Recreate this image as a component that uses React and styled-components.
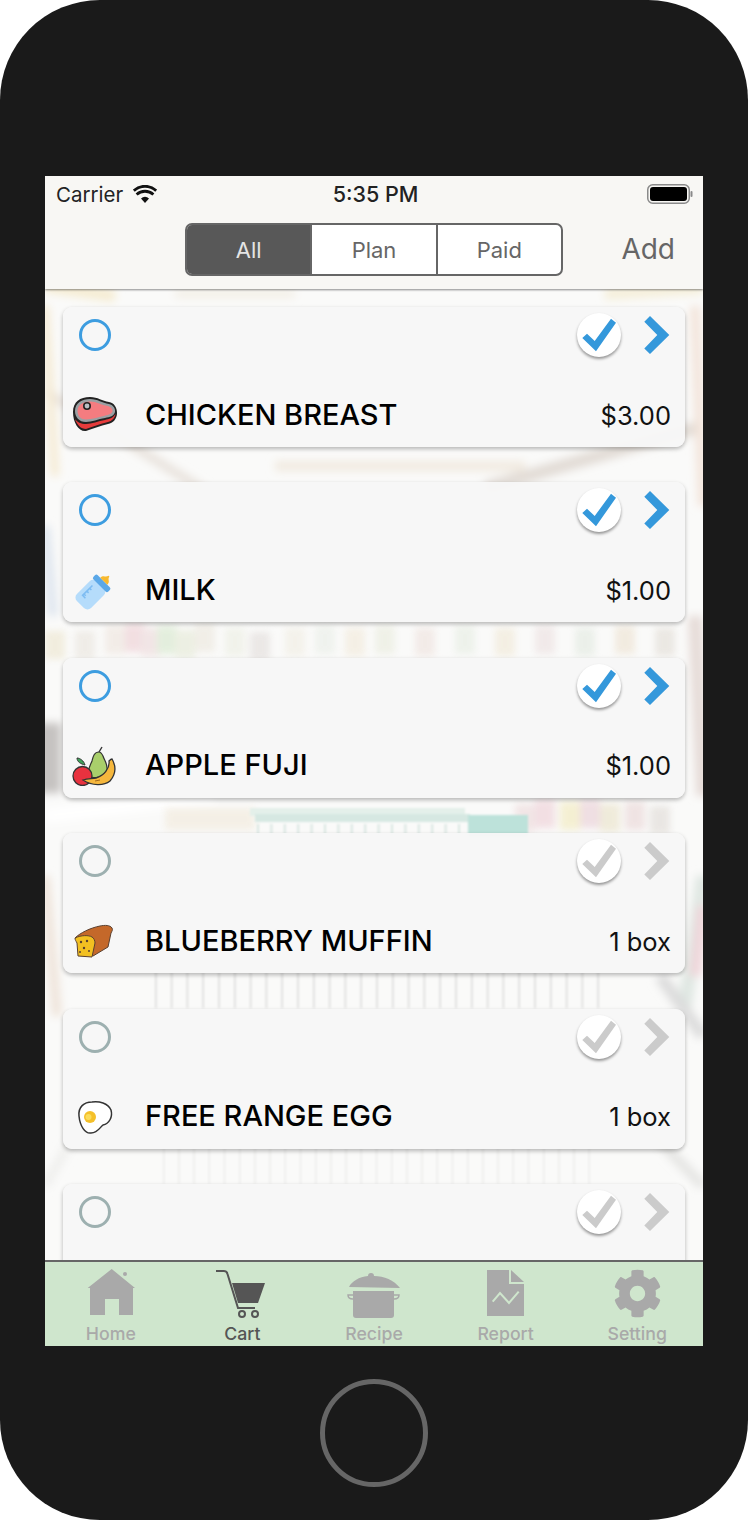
import styled, { createGlobalStyle } from "styled-components"
import { FaCog } from "react-icons/fa"

const GlobalStyle = createGlobalStyle`
    html, body {
        margin: 0;
        padding: 0;
        background: #fff;
    }
    * {
        box-sizing: border-box;
    }
`

const Phone = styled.div`
    width: 748px;
    height: 1520px;
    background: #1a1a1a;
    border-radius: 100px;
    padding-top: 176px;
    display: flex;
    flex-direction: column;
    align-items: center;
    font-family: Inter, "Liberation Sans", sans-serif;
    overflow: hidden;
`
const Screen = styled.div`
    position: relative;
    width: 658px;
    height: 1170px;
    background: #fafaf9;
    display: flex;
    flex-direction: column;
    overflow: hidden;
`
const Backdrop = styled.svg`
    position: absolute;
    left: 0;
    top: 0;
    width: 658px;
    height: 1170px;
`
const HomeButton = styled.div`
    width: 108px;
    height: 108px;
    margin-top: 33px;
    border-radius: 50%;
    border: 5px solid #666;
`
const Header = styled.header`
    position: relative;
    z-index: 2;
    height: 113px;
    flex: none;
    background: #f8f7f4;
    box-shadow: 0 1px 2px rgba(0, 0, 0, 0.45);
`
const StatusBar = styled.div`
    height: 36px;
    padding: 0 10px 0 11px;
    display: flex;
    align-items: center;
    font-size: 20.5px;
    color: #222;
    position: relative;
`
const Carrier = styled.span`
    margin-right: 10px;
`
const Clock = styled.span`
    position: absolute;
    left: 0;
    right: 0;
    text-align: center;
    font-size: 21.5px;
    font-weight: 500;
    margin-left: 3px;
`
const Battery = styled.svg`
    margin-left: auto;
`
const NavBar = styled.div`
    height: 77px;
    padding: 11px 28px 13px 140px;
    display: flex;
    align-items: flex-start;
    justify-content: space-between;
`
const Segments = styled.div`
    display: flex;
    width: 378px;
    height: 53px;
    border: 2px solid #666;
    border-radius: 7px;
    background: #fff;
    overflow: hidden;
`
const Segment = styled.div`
    flex: 1;
    display: flex;
    align-items: center;
    justify-content: center;
    font-size: 22px;
    color: ${props => props.$active ? "#e4e4e4" : "#666"};
    background: ${props => props.$active ? "#585858" : "transparent"};
    & + & {
        border-left: 2px solid #666;
    }
`
const AddButton = styled.span`
    font-size: 28px;
    line-height: 53px;
    color: #666;
`
const List = styled.main`
    position: relative;
    z-index: 1;
    flex: 1;
    min-height: 0;
    padding: 18px 18px 0;
    display: flex;
    flex-direction: column;
    gap: 35.4px;
    overflow: hidden;
`
const Card = styled.article`
    flex: none;
    height: 140px;
    border-radius: 9px;
    background: rgba(247, 247, 247, 0.96);
    box-shadow: 0 2px 4px rgba(0, 0, 0, 0.28);
    display: flex;
    flex-direction: column;
    justify-content: space-between;
`
const CardTop = styled.div`
    padding: 6px 15px 0 16px;
    display: flex;
    align-items: center;
`
const Radio = styled.span`
    width: 32px;
    height: 32px;
    border-radius: 50%;
    border: 3px solid ${props => props.$on ? "#3d9de0" : "#9db0b0"};
    margin-right: auto;
`
const CheckButton = styled.span`
    width: 44px;
    height: 44px;
    border-radius: 50%;
    background: #fff;
    box-shadow: 0 2px 3px rgba(0, 0, 0, 0.4);
    margin-right: 23px;
    display: flex;
`
const CardBottom = styled.div`
    height: 56px;
    padding: 0 14px 8px 9px;
    display: flex;
    align-items: center;
`
const ItemIcon = styled.span`
    width: 46px;
    height: 40px;
    margin-right: 27px;
    display: flex;
`
const ItemName = styled.span`
    font-size: 29px;
    font-weight: 500;
    color: #000;
    padding-bottom: 2px;
`
const ItemValue = styled.span`
    margin-left: auto;
    font-size: 25.5px;
    color: #111;
`
const TabBar = styled.nav`
    position: relative;
    z-index: 2;
    flex: none;
    height: 86px;
    background: #cfe6cd;
    border-top: 2px solid #666;
    display: grid;
    grid-template-columns: repeat(5, 1fr);
`
const Tab = styled.div`
    display: flex;
    flex-direction: column;
    align-items: center;
    padding-top: 5px;
    color: ${props => props.$active ? "#555" : "#a9a9a9"};
`
const TabGlyph = styled.div`
    width: 60px;
    height: 52px;
    display: flex;
    align-items: center;
    justify-content: center;
`
const TabLabel = styled.span`
    font-size: 17.7px;
    line-height: 20px;
    font-weight: 500;
    margin-top: 5px;
`

const Wifi = () => (
    <svg width="24" height="18" viewBox="0 0 24 18">
        <path d="M12 18l-4-4.600a6 6 0 0 1 8 0z" fill="#111" />
        <path d="M3.600 8.600a12.200 12.200 0 0 1 16.800 0M.8 4.600a16.600 16.600 0 0 1 22.400 0" fill="none" stroke="#111" strokeWidth="2.800" transform="translate(0 1)" />
    </svg>
)

const Check = ({ color }) => (
    <svg width="44" height="44" viewBox="0 0 44 44">
        <path d="M5.300 25L10 20.700l7.700 7.300L34 5.700l5 4L19 38.300z" fill={color} />
    </svg>
)

const Chevron = ({ color }) => (
    <svg width="26" height="38" viewBox="0 0 26 38">
        <path d="M.3 5.700L6 0l19.300 19L6 38 .3 32.400 13.300 19z" fill={color} />
    </svg>
)

const Meat = () => (
    <svg width="46" height="40" viewBox="0 0 46 40">
        <path d="M1 17C1 7 8 2 18 2c8 0 12 4 19 5 5 1 8 5 8 11s-4 10-9 11c-8 2-14 4-22 7C7 37 1 28 1 17z" fill="#222" />
        <path d="M3 24c2 6 6 10 11 10 8-3 14-5 22-7 4-1 7-4 7.500-8-2.500 4-6.500 5-10.500 6-7 1-13 4-19 4-5 0-9-2-11-5z" fill="#e63b3b" />
        <path d="M3 16C3 8 10 4 18 4c8 0 12 4 19 5 4 1 6.500 4 6 8-1 4-5 5-10 6-7 1-13 4-19 4C7 27 3 22 3 16z" fill="#9aa0a3" />
        <path d="M5.500 16c0-6 5.500-9.500 12.500-9.500S29 10 36 11c3 1 5 3 4.500 5.500C40 19 36 20 32 21c-6 1-12 3.500-18 3.500-5 0-8.500-3.500-8.500-8.500z" fill="#f47c80" />
        <circle cx="15" cy="11" r="4" fill="#222" />
        <circle cx="15" cy="11" r="2.400" fill="#b9c0c4" />
    </svg>
)

const Bottle = () => (
    <svg width="46" height="40" viewBox="0 0 46 40">
        <g transform="translate(2 -1) rotate(45 22 20)">
            <rect x="12" y="14" width="20" height="28" rx="5" fill="#b5dcfb" />
            <rect x="11.500" y="9" width="21" height="6" rx="2" fill="#5ba8e8" />
            <path d="M17 9c0-4 3-4 4-6 0-2 2-2 2 0 1 2 4 2 4 6z" fill="#f7b92f" />
            <path d="M17 20v14h4M17 24h2.500M17 28h2.500M17 32h2.500" stroke="#7dbcf2" strokeWidth="1.500" fill="none" />
        </g>
    </svg>
)

const Fruit = () => (
    <svg width="46" height="40" viewBox="0 0 46 40">
        <path d="M27 6c-5 0-6 5-7 9-2 5-5 9-3 15 5 4 15 0 18-6 1-6-3-10-4-14-1-2-2-4-4-4z" fill="#a9cf6b" stroke="#333" strokeWidth="1.200" />
        <path d="M27 6l3-5" stroke="#333" strokeWidth="1.400" />
        <path d="M13 19c-1-4-5-7-8-7 0 4 4 6 8 7z" fill="#3fa35a" stroke="#333" strokeWidth="1" />
        <circle cx="10.500" cy="30" r="9.500" fill="#e8323f" stroke="#333" strokeWidth="1.300" />
        <path d="M40 13c4 7 4 15-2 22-6 5-18 5-27-1 5-2 9-1 13-2 8-2 14-10 13-17 1-1 2-2 3-2z" fill="#f5b73d" stroke="#333" strokeWidth="1.300" />
        <path d="M23 35l5-1" stroke="#a36a1c" strokeWidth="1" />
    </svg>
)

const Bread = () => (
    <svg width="46" height="40" viewBox="0 0 46 40">
        <path d="M3 17C8 12 18 7 28 5c5-1 10-1 12 2 1 2 0 3-1 5l-3 14-15 9z" fill="#c4682a" stroke="#5a4030" strokeWidth="1" />
        <path d="M3 17c6-3 14-3 17-1 2 1 3 4 3 6l-3 14-14-1-1-13c-1-2-2-3-2-5z" fill="#f2c021" stroke="#5a4030" strokeWidth="1" />
        <circle cx="9" cy="21" r="1.200" fill="#5a4030" />
        <circle cx="15" cy="20" r="1.200" fill="#5a4030" />
        <circle cx="12" cy="27" r="1.200" fill="#5a4030" />
        <circle cx="8" cy="31" r="1" fill="#5a4030" />
        <circle cx="17" cy="30" r="1" fill="#5a4030" />
    </svg>
)

const Egg = () => (
    <svg width="46" height="40" viewBox="0 0 46 40">
        <path d="M7 19c-1-9 5-14 13-14 7-1 16 1 19 8 2 7-2 14-8 15-3 2-5 8-12 8-6 1-11-7-12-17z" fill="#fff" stroke="#333" strokeWidth="1.500" />
        <circle cx="18" cy="20" r="6" fill="#f4c02a" />
        <circle cx="16.500" cy="20" r="3" fill="#fbdc5a" />
    </svg>
)

const HomeIcon = () => (
    <svg width="60" height="52" viewBox="0 0 60 52" fill="currentColor">
        <path d="M30.700 2L54 21h-2v27H38V32H24v16H9V21H6.700z" />
        <circle cx="44" cy="7" r="2" />
    </svg>
)

const CartIcon = () => (
    <svg width="60" height="52" viewBox="0 0 60 52" fill="currentColor">
        <path d="M4 4h8c2 0 3 1 3.500 3L26 41h17" fill="none" stroke="currentColor" strokeWidth="2" />
        <path d="M20 16h33l-7 20H26z" />
        <circle cx="30" cy="47" r="3" fill="none" stroke="currentColor" strokeWidth="2" />
        <circle cx="43" cy="47" r="3" fill="none" stroke="currentColor" strokeWidth="2" />
    </svg>
)

const PotIcon = () => (
    <svg width="60" height="52" viewBox="0 0 60 52" fill="currentColor">
        <path d="M9 24h41v24c0 2-1 3-3 3H12c-2 0-3-1-3-3z" />
        <path d="M5 20c3-6 10-10 19-11 0-2 1-3 3-3s3 1 3 3c10 0 20 4 26 12z" />
        <path d="M9 28H4c0 3 2 4 5 4M50 28h5c0 3-2 4-5 4" fill="none" stroke="currentColor" strokeWidth="1.500" />
    </svg>
)

const ReportIcon = () => (
    <svg width="60" height="52" viewBox="0 0 60 52" fill="currentColor">
        <path d="M11 3h22v14h15v32H11z" />
        <path d="M35 3l13 12H35z" />
        <path d="M16.700 34.700L24 26l9 10 9.700-11.300" fill="none" stroke="#cfe6cd" strokeWidth="2" />
    </svg>
)

const items = [
    { name: "CHICKEN BREAST", value: "$3.00", icon: <Meat />, on: true },
    { name: "MILK", value: "$1.00", icon: <Bottle />, on: true },
    { name: "APPLE FUJI", value: "$1.00", icon: <Fruit />, on: true },
    { name: "BLUEBERRY MUFFIN", value: "1 box", icon: <Bread />, on: false },
    { name: "FREE RANGE EGG", value: "1 box", icon: <Egg />, on: false },
    { name: "", value: "", icon: null, on: false },
]

const tabs = [
    { label: "Home", icon: <HomeIcon /> },
    { label: "Cart", icon: <CartIcon />, active: true },
    { label: "Recipe", icon: <PotIcon /> },
    { label: "Report", icon: <ReportIcon /> },
    { label: "Setting", icon: <FaCog size={49} /> },
]

// blurred shop aisle behind the list: [path, colour, width]
const shelfStreaks = [
    ["M0 110L70 120", "#f5ecd2", 12],
    ["M130 118L250 118", "#f3efe6", 8],
    ["M560 118L658 112", "#f5efda", 12],
    ["M0 215L160 315", "#e8e2dc", 9],
    ["M658 250L440 312", "#e2dcd6", 13],
    ["M230 290L480 290", "#f1eae0", 10],
    ["M0 130L10 300", "#f5ead2", 8],
    ["M650 130L658 330", "#f3e4da", 10],
    ["M0 350L8 440", "#dfe6ef", 10],
    ["M650 440L658 620", "#e6dcd8", 14],
    ["M0 547L0 617", "#c6c3c1", 32],
    ["M0 640L170 620", "#ffffff", 14],
    ["M658 700L640 830", "#dfe7e2", 14],
    ["M658 730L650 800", "#efd6da", 12],
    ["M615 800L658 860", "#dcdcdc", 12],
    ["M0 700L12 840", "#efe4da", 10],
    ["M600 950L658 1010", "#e5e5e3", 10],
    ["M0 1010L40 940", "#eeeeec", 8],
]

// shelf goods seen between the second and third card, and right of the cart handle
const goods = [
    [0, 455, "#efe9d6"], [30, 455, "#ece8e2"], [60, 450, "#f0e8e2"], [80, 448, "#f0d6da"], [96, 452, "#efdfe0"],
    [112, 450, "#dcebd4"], [130, 454, "#e8ecdc"], [150, 448, "#eeeae2"], [180, 452, "#eef0e6"], [205, 456, "#e6e2e0"],
    [240, 452, "#f2efe6"], [270, 450, "#ecf0ea"], [300, 452, "#f3ecdf"], [330, 450, "#eceee2"], [370, 452, "#f0e6e2"],
    [410, 450, "#e9efe6"], [450, 452, "#f2ebdc"], [490, 450, "#eee4e4"], [530, 452, "#e6ece4"], [570, 450, "#efe6d8"],
    [610, 452, "#e6e2dc"],
    [470, 628, "#efdfe0"], [490, 624, "#f0d6dc"], [515, 626, "#f3ecc6"], [535, 624, "#ecd6dc"], [555, 628, "#ece6d0"],
    [580, 626, "#ecdcdc"], [605, 630, "#e4e0dc"],
]

const Aisle = () => (
    <Backdrop viewBox="0 0 658 1170">
        <defs>
            <filter id="soft" x="-10%" y="-10%" width="120%" height="120%">
                <feGaussianBlur stdDeviation="4" />
            </filter>
            <filter id="soft-small" x="-10%" y="-10%" width="120%" height="120%">
                <feGaussianBlur stdDeviation="3.500" />
            </filter>
            <filter id="soft-line" x="-10%" y="-10%" width="120%" height="120%">
                <feGaussianBlur stdDeviation="0.800" />
            </filter>
        </defs>
        <g filter="url(#soft)" fill="none">
            {shelfStreaks.map(([d, color, w]) => (
                <path key={d} d={d} stroke={color} strokeWidth={w} />
            ))}
        </g>
        <g filter="url(#soft-small)" opacity="0.75">
            {goods.map(([x, y, color]) => (
                <rect key={x + "-" + y} x={x} y={y} width="20" height="28" fill={color} />
            ))}
            <rect x="120" y="632" width="90" height="22" fill="#f3ece0" />
        </g>
        <g filter="url(#soft-line)">
            <rect x="205" y="632" width="215" height="8" fill="#e4f0ea" />
            <rect x="210" y="638" width="215" height="8" fill="#d6e8e2" />
            <rect x="423" y="639" width="60" height="22" fill="#bde2da" />
            {Array.from({ length: 16 }, (_, i) => (
                <rect key={i} x={212 + i * 13.400} y="648" width="2" height="12" fill="#d9e7e2" />
            ))}
            {Array.from({ length: 29 }, (_, i) => (
                <rect key={i} x={110 + i * 15.800} y="796" width="1.600" height="36" fill="#dcdcdb" />
            ))}
            {Array.from({ length: 29 }, (_, i) => (
                <rect key={i} x={118 + i * 15.200} y="972" width="1.400" height="36" fill="#ebebea" />
            ))}
        </g>
    </Backdrop>
)

const App = () => {
    return (
        <Phone>
            <GlobalStyle />
            <Screen>
                <Aisle />
                <Header>
                    <StatusBar>
                        <Carrier>Carrier</Carrier>
                        <Wifi />
                        <Clock>5:35 PM</Clock>
                        <Battery width="46" height="20" viewBox="0 0 46 20">
                            <rect x=".75" y=".75" width="41.500" height="18.500" rx="5" fill="none" stroke="#8a8a8a" strokeWidth="1.500" />
                            <rect x="3" y="3" width="37" height="14" rx="3" fill="#000" />
                            <rect x="43.500" y="7" width="2" height="6" rx="1" fill="#8a8a8a" />
                        </Battery>
                    </StatusBar>
                    <NavBar>
                        <Segments>
                            <Segment $active>All</Segment>
                            <Segment>Plan</Segment>
                            <Segment>Paid</Segment>
                        </Segments>
                        <AddButton>Add</AddButton>
                    </NavBar>
                </Header>
                <List>
                    {items.map((item, i) => (
                        <Card key={i}>
                            <CardTop>
                                <Radio $on={item.on} />
                                <CheckButton>
                                    <Check color={item.on ? "#3498db" : "#cbcbcb"} />
                                </CheckButton>
                                <Chevron color={item.on ? "#3498db" : "#cbcbcb"} />
                            </CardTop>
                            <CardBottom>
                                <ItemIcon>{item.icon}</ItemIcon>
                                <ItemName>{item.name}</ItemName>
                                <ItemValue>{item.value}</ItemValue>
                            </CardBottom>
                        </Card>
                    ))}
                </List>
                <TabBar>
                    {tabs.map(tab => (
                        <Tab key={tab.label} $active={tab.active}>
                            <TabGlyph>{tab.icon}</TabGlyph>
                            <TabLabel>{tab.label}</TabLabel>
                        </Tab>
                    ))}
                </TabBar>
            </Screen>
            <HomeButton />
        </Phone>
    )
}

export default App
